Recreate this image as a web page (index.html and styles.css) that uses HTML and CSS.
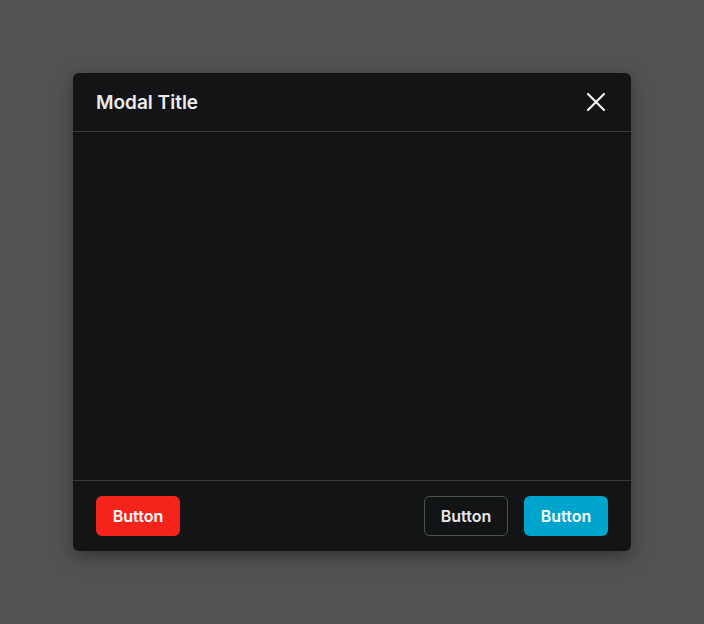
FILE: index.html
```html
<!DOCTYPE html>
<html lang="en">
<head>
<meta charset="utf-8">
<title>Modal</title>
<link rel="stylesheet" href="styles.css">
</head>
<body>
<div class="backdrop">
  <div class="modal">
    <header class="modal-header">
      <h2 class="modal-title">Modal Title</h2>
      <button class="close" aria-label="Close">
        <svg width="24" height="24" viewBox="0 0 24 24" fill="none" stroke="#f2f2f2" stroke-width="2.2" stroke-linecap="round"><path d="M4 4l16 16M20 4L4 20"/></svg>
      </button>
    </header>
    <div class="modal-body"></div>
    <footer class="modal-footer">
      <button class="btn btn-danger">Button</button>
      <div class="actions">
        <button class="btn btn-outline">Button</button>
        <button class="btn btn-primary">Button</button>
      </div>
    </footer>
  </div>
</div>
</body>
</html>
```
FILE: styles.css
```css
* { box-sizing: border-box; }
html, body { margin: 0; height: 100%; }
body {
  background: #525252;
  font-family: Inter, "Noto Sans", sans-serif;
}
.backdrop {
  height: 624px;
  display: flex;
  align-items: center;
  justify-content: center;
}
.modal {
  width: 558px;
  height: 478px;
  background: #131416;
  border-radius: 6px;
  box-shadow: 0 6px 18px rgba(0,0,0,0.35);
  display: flex;
  flex-direction: column;
}
.modal-header {
  height: 59px;
  padding: 0 23px;
  border-bottom: 1px solid #37383a;
  display: flex;
  align-items: center;
  justify-content: space-between;
}
.modal-title {
  margin: 0;
  font-family: Inter, sans-serif;
  font-size: 19px;
  font-weight: 600;
  color: #ececec;
}
.close {
  background: none;
  border: 0;
  padding: 0;
  width: 24px;
  height: 24px;
  cursor: pointer;
}
.close svg { display: block; }
.modal-body { flex: 1; }
.modal-footer {
  height: 71px;
  padding: 0 23px;
  border-top: 1px solid #37383a;
  display: flex;
  align-items: center;
  justify-content: space-between;
}
.actions { display: flex; gap: 16px; }
.btn {
  width: 84px;
  height: 40px;
  border-radius: 6px;
  border: 1px solid transparent;
  font-family: Inter, sans-serif;
  font-size: 16px;
  font-weight: 600;
  color: #fff;
  cursor: pointer;
}
.btn-danger { background: #f5241a; }
.btn-outline { background: transparent; border-color: #4d5557; color: #e8e8e8; }
.btn-primary { background: #00a5cd; }
```
